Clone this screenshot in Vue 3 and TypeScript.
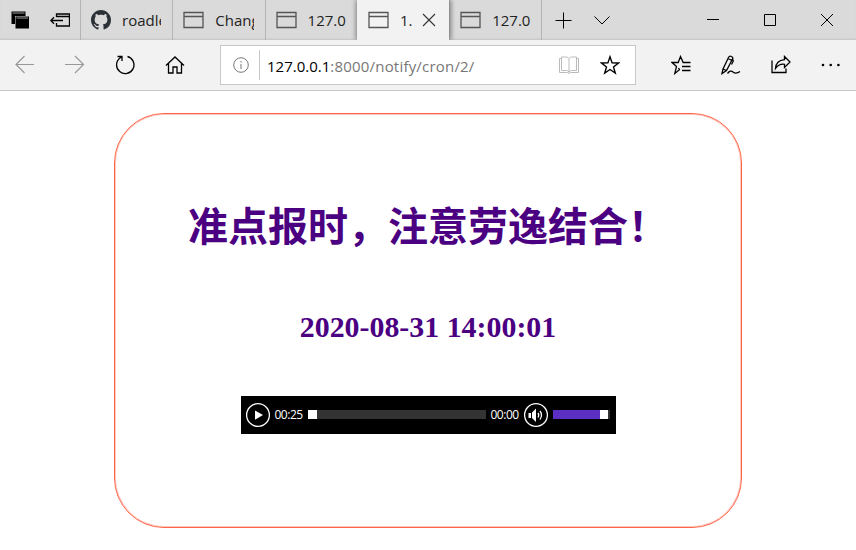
<script setup lang="ts">
interface Tab {
  title: string
  icon: 'github' | 'page'
  active?: boolean
}

const tabs: Tab[] = [
  { title: 'roadle', icon: 'github' },
  { title: 'Chang', icon: 'page' },
  { title: '127.0', icon: 'page' },
  { title: '1.', icon: 'page', active: true },
  { title: '127.0', icon: 'page' },
]
const heading = '准点报时，注意劳逸结合！'
const time = '2020-08-31 14:00:01'
const volume = 83
</script>

<template>
  <div class="window">
    <header class="tabbar">
      <div class="cell">
        <svg class="ic" width="20" height="20" viewBox="0 0 20 20"><path class="solid" d="M1.500 1.500h14v4.500H5V14H1.500z" /><path class="solid" d="M5.500 6.500H19v12H5.500z" /><path class="pale" d="M2.500 3h12M6.500 8h11.500" /></svg>
      </div>
      <div class="cell">
        <svg class="ic ink thick" width="20" height="20" viewBox="0 0 20 20"><path d="M6.500 7V4h13v12h-13v-3M6.500 6.500h13M.800 10.500H13M4 7.200.800 10.500 4 13.800" /></svg>
      </div>
      <div v-for="(tab, i) in tabs" :key="i" class="tab" :class="{ active: tab.active }">
        <svg v-if="tab.icon === 'github'" class="ic" width="20" height="20" viewBox="0 0 16 16"><path class="cat" d="M8 0C3.580 0 0 3.580 0 8c0 3.540 2.290 6.530 5.470 7.590.400.070.550-.170.550-.380 0-.190-.010-.820-.010-1.490-2.010.370-2.530-.490-2.690-.940-.090-.230-.480-.940-.820-1.130-.280-.150-.680-.520-.010-.530.630-.010 1.080.580 1.230.820.720 1.210 1.870.870 2.330.660.070-.520.280-.870.510-1.070-1.780-.200-3.640-.890-3.640-3.950 0-.870.310-1.590.820-2.150-.080-.200-.360-1.020.080-2.120 0 0 .670-.210 2.200.820.640-.180 1.320-.270 2-.270s1.360.090 2 .270c1.530-1.040 2.200-.820 2.200-.820.440 1.100.160 1.920.080 2.120.510.560.820 1.270.820 2.150 0 3.070-1.870 3.750-3.650 3.950.290.250.540.730.540 1.480 0 1.070-.010 1.930-.010 2.200 0 .210.150.460.550.380A8.010 8.010 0 0 0 16 8c0-4.420-3.580-8-8-8z" /></svg>
        <svg v-else class="ic page" width="21" height="18" viewBox="0 0 21 18"><path d="M1 1.500h19v15H1zM1 5.500h19" /></svg>
        <span class="title">{{ tab.title }}</span>
        <svg v-if="tab.active" class="ic close" width="14" height="14" viewBox="0 0 14 14"><path d="M1 1l12 12M13 1 1 13" /></svg>
      </div>
      <div class="cell plus">
        <svg class="ic ink" width="17" height="17" viewBox="0 0 17 17"><path d="M8.500.500v16M.500 8.500h16" /></svg>
      </div>
      <div class="cell chev">
        <svg class="ic ink" width="16" height="9" viewBox="0 0 16 9"><path d="M.500.500 8 8l7.500-7.500" /></svg>
      </div>
      <div class="controls">
        <div class="control"><svg class="ic ink" width="12" height="12" viewBox="0 0 12 12"><path d="M0 5.500h12" /></svg></div>
        <div class="control"><svg class="ic ink" width="12" height="12" viewBox="0 0 12 12"><path d="M.500.500h11v11H.500z" /></svg></div>
        <div class="control"><svg class="ic ink" width="12" height="12" viewBox="0 0 12 12"><path d="M0 0l12 12M12 0 0 12" /></svg></div>
      </div>
    </header>

    <nav class="toolbar">
      <div class="tool"><svg class="ic faded" width="20" height="20" viewBox="0 0 20 20"><path d="M19 9.500H1M9.500 1 1 9.500 9.500 18" /></svg></div>
      <div class="tool"><svg class="ic faded" width="20" height="20" viewBox="0 0 20 20"><path d="M0 9.500h18.500M10 1l8.500 8.500L10 18" /></svg></div>
      <div class="tool"><svg class="ic ink thick" width="20" height="20" viewBox="0 0 20 20"><path d="M12.500 1.500A8.700 8.700 0 1 1 5 3L7 1.500M2.500 1.500H7V6" /></svg></div>
      <div class="tool"><svg class="ic ink thick" width="20" height="20" viewBox="0 0 20 20"><path d="M1 10.500 10 2l9 8.500M3.500 8.500v9.500h4.500v-6h4v6h4.500V8.500" /></svg></div>
      <div class="address">
        <svg class="ic info" width="16" height="16" viewBox="0 0 16 16"><circle cx="8" cy="8" r="7.300" /><path d="M8 7v5M8 4v1.500" /></svg>
        <span class="rule"></span>
        <span class="url"><b>127.0.0.1</b>:8000/notify/cron/2/</span>
        <svg class="ic book" width="20" height="18" viewBox="0 0 20 18"><path d="M2.500 2.500h-2v14h8l1.500 1 1.500-1h8v-14h-2M10 2.500v14M10 2.500Q9 1 7.500 1h-5v13.500h5Q9 14.500 10 16M10 2.500Q11 1 12.500 1h5v13.500h-5Q11 14.500 10 16" /></svg>
        <svg class="ic ink star" width="20" height="20" viewBox="0 0 20 20"><path d="m10 1.800 2.100 6.100 6.400.100-5 3.900 1.800 6.200L10 14.500l-5.300 3.600 1.800-6.200-5-3.900 6.400-.100z" /></svg>
      </div>
      <div class="tool first"><svg class="ic ink thick" width="20" height="20" viewBox="0 0 20 20"><path d="M19.500 7.500h-7.300L9.500 1.500 7.200 7.500H1L5.500 11.500l-1.700 7 4.700-3.800L7.500 13M11 11.500h8.500M11 15.500h8.500" /></svg></div>
      <div class="tool"><svg class="ic ink thick" width="20" height="20" viewBox="0 0 20 20"><path d="M1 18.500 2 14 7.500 2.500Q8.500.500 10.500 1.500T11.500 4L5.500 15.500zM2 14l3.500 1.500M7 3.500l4 2M11.500 4l.8 2-1.800 3.500M6.500 18.500q3-4 5.500-1.500 3 2.500 7-.500" /></svg></div>
      <div class="tool"><svg class="ic ink thick" width="20" height="20" viewBox="0 0 20 20"><path d="M1 5.500v12h14v-4M13.500 1.500 19 7l-5.500 5.500V9.300Q8 8.500 4.500 13.500 5 5.500 13.500 4.700z" /></svg></div>
      <div class="tool"><svg class="ic dots" width="20" height="20" viewBox="0 0 20 20"><circle cx="2" cy="10" r="1.300" /><circle cx="9.700" cy="10" r="1.300" /><circle cx="17.400" cy="10" r="1.300" /></svg></div>
    </nav>

    <main class="content">
      <section class="card">
        <h1>{{ heading }}</h1>
        <h2>{{ time }}</h2>
        <div class="player">
          <svg class="ic round" width="26" height="26" viewBox="0 0 26 26"><circle cx="13" cy="13" r="11.400" /><path class="white" d="M10 8.500v9.200l8-4.600z" /></svg>
          <span class="clock">00:25</span>
          <div class="track"><span class="thumb"></span></div>
          <span class="clock">00:00</span>
          <svg class="ic round" width="26" height="26" viewBox="0 0 26 26"><circle cx="13" cy="13" r="11.400" /><path class="white" d="M5.500 11H8v5H5.500zM9 10.500l4-4v13.500L9 16z" /><path d="M15 11q1.500 2 0 4.500M17 9q3 4 0 8.500" /></svg>
          <div class="volume"><span class="level" :style="{ width: volume + '%' }"></span><span class="thumb"></span></div>
        </div>
      </section>
    </main>
  </div>
</template>

<style>
body {
  background: #fff;
  overflow: hidden;
}
</style>

<style scoped>
.window {
  width: 856px;
  height: 550px;
  display: flex;
  flex-direction: column;
  font-family: "Open Sans", "Noto Sans", sans-serif;
  color: #111;
}
.ic {
  display: block;
  flex: none;
  fill: none;
}
.ink { stroke: #000; }
.thick { stroke-width: 1.3; }
.solid { fill: #000; }
.pale { stroke: #999; }
.cat { fill: #2b3137; }
.tabbar {
  display: flex;
  height: 40px;
  flex: none;
  background: #dadada;
  box-shadow: inset 0 -2px 2px -1px #c4c4c4;
}
.cell {
  width: 40px;
  display: flex;
  align-items: center;
  justify-content: center;
}
.tab {
  box-sizing: border-box;
  width: 92.3px;
  padding-left: 10px;
  border-left: 1px solid #b4b4b4;
  display: flex;
  align-items: center;
}
.tab.active {
  background: #f2f2f2;
  border-left-color: #f2f2f2;
  box-shadow: -1px 0 5px #888, 2px 0 5px #888;
  clip-path: inset(0 -6px 0 -6px);
}
.page { stroke: #555; stroke-width: 1.3; }
.title {
  width: 39px;
  margin-left: 11px;
  overflow: hidden;
  white-space: nowrap;
  font-size: 15px;
  line-height: 22px;
  color: #222;
}
.active .title { width: 13px; }
.close { stroke: #333; margin-left: 9px; stroke-width: 1.1; }
.plus {
  width: 42px;
  border-left: 1px solid #b4b4b4;
}
.chev { width: 36px; }
.controls {
  margin-left: auto;
  padding-right: 1px;
  display: flex;
}
.control {
  width: 57px;
  display: flex;
  align-items: center;
  justify-content: center;
}
.toolbar {
  height: 50px;
  flex: none;
  display: flex;
  align-items: center;
  background: #f2f2f2;
  border-bottom: 1px solid #c8c8c8;
}
.tool {
  width: 50px;
  display: flex;
  justify-content: center;
}
.faded { stroke: #999; stroke-width: 1.2; }
.address {
  box-sizing: border-box;
  width: 416px;
  height: 40px;
  margin-left: 20px;
  padding: 0 15px 0 12px;
  border: 1px solid #c8c8c8;
  background: #fff;
  display: flex;
  align-items: center;
}
.info { stroke: #777; }
.rule {
  width: 1px;
  height: 30px;
  margin: 0 7px 0 10px;
  background: #c8c8c8;
}
.url {
  flex: 1;
  font-size: 15px;
  letter-spacing: 0.2px;
  line-height: 22px;
  padding-top: 1px;
  color: #777;
  white-space: nowrap;
}
.url b {
  font-weight: 400;
  letter-spacing: 0;
  color: #000;
}
.book { stroke: #bbb; }
.star { margin-left: 21px; stroke-width: 1.4; }
.first { margin-left: 20px; }
.dots { fill: #000; }
.content {
  flex: 1;
  display: flex;
  justify-content: center;
  align-items: flex-start;
  padding-top: 22px;
}
.card {
  box-sizing: border-box;
  width: 628px;
  height: 415px;
  border: 1px solid tomato;
  box-shadow: inset 0 0 0 1px rgba(255, 99, 71, 0.35);
  border-radius: 50px;
  display: flex;
  flex-direction: column;
  align-items: center;
  color: indigo;
}
h1 {
  margin: 80px 0 0;
  font: bold 40px/60px "Noto Sans CJK SC", sans-serif;
  white-space: nowrap;
}
h2 {
  margin: 55px 0 0;
  font: bold 29.900px/36px "Liberation Serif", serif;
  white-space: nowrap;
}
.player {
  box-sizing: border-box;
  width: 375px;
  height: 38px;
  margin-top: 51px;
  padding: 0 6px 1px 4px;
  background: #000;
  display: flex;
  align-items: center;
}
.round { stroke: #fff; stroke-width: 1.3; }
.white { fill: #fff; stroke: none; }
.clock {
  width: 29px;
  margin-left: 4px;
  font-size: 12px;
  letter-spacing: -0.5px;
  line-height: 16px;
  color: #fff;
}
.track {
  flex: 1;
  height: 9px;
  margin-left: 4px;
  background: #333;
}
.track + .clock {
  width: 32px;
  margin-left: 5px;
}
.thumb {
  display: block;
  width: 9px;
  height: 9px;
  background: #fff;
}
.volume {
  display: flex;
  width: 57px;
  height: 9px;
  margin-left: 4px;
  background: #333;
}
.level { background: #5b2fc4; }
.volume .thumb { width: 8px; }
</style>
